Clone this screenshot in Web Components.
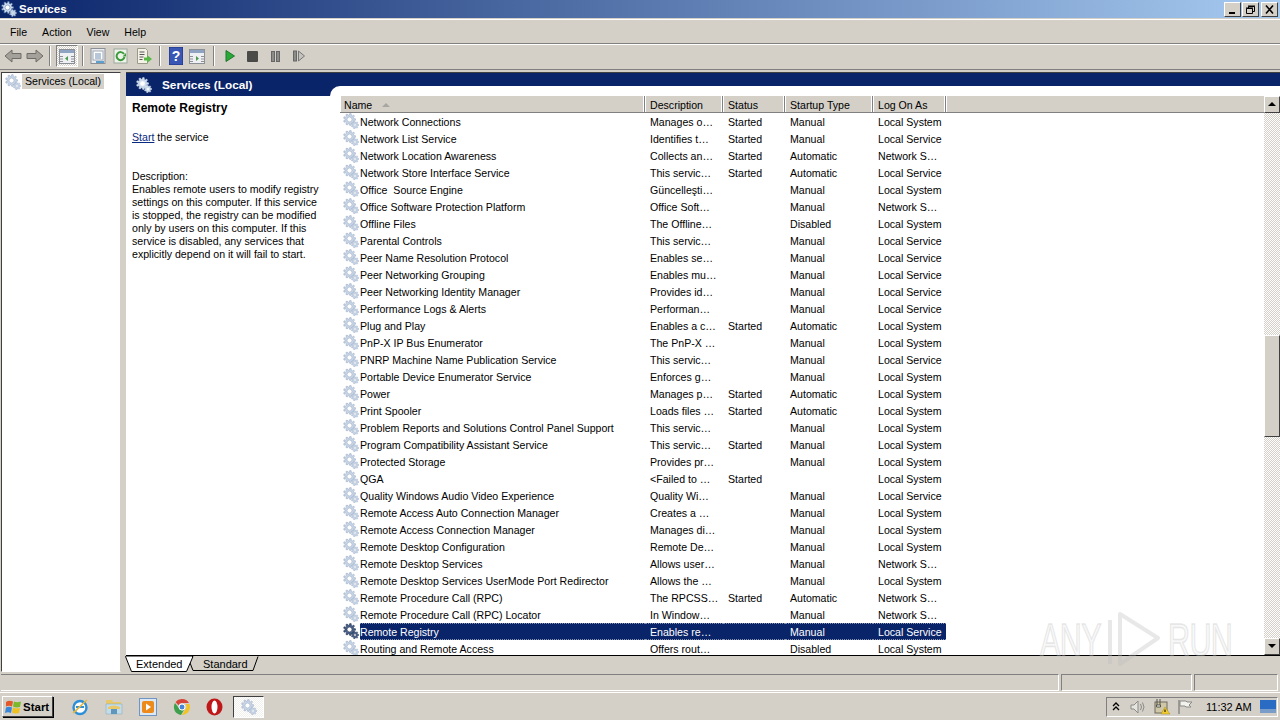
<!DOCTYPE html>
<html>
<head>
<meta charset="utf-8">
<title>Services</title>
<style>
    html, body { margin: 0; padding: 0; height: 100%; overflow: hidden; background: #d4d0c8; }
    body { font: 10.6px "Liberation Sans", Arial, sans-serif; color: #000; }
</style>
</head>
<body>
<services-window></services-window>
<script>
// gear outline, used by every service icon
function gearPath(cx, cy, r, teeth) {
    const inner = r * 0.74;
    let d = '';
    const step = Math.PI * 2 / teeth;
    for (let i = 0; i < teeth; i++) {
        const a = i * step;
        const pts = [
            [inner, a - step * 0.5], [inner, a - step * 0.28],
            [r, a - step * 0.18], [r, a + step * 0.18], [inner, a + step * 0.28]
        ];
        pts.forEach((p, j) => {
            const x = (cx + Math.cos(p[1]) * p[0]).toFixed(2);
            const y = (cy + Math.sin(p[1]) * p[0]).toFixed(2);
            d += (i === 0 && j === 0 ? 'M' : 'L') + x + ' ' + y;
        });
    }
    return d + 'Z';
}

function gearSvg(size, fill, line) {
    return `<svg width="${size}" height="${size}" viewBox="0 0 16 16" style="display:block">
        <path d="${gearPath(6.5, 6.5, 6, 9)}" fill="${fill}" stroke="${line}" stroke-width=".6"/>
        <circle cx="6.5" cy="6.5" r="2.5" fill="#fff" stroke="${line}" stroke-width=".6"/>
        <path d="${gearPath(12, 12, 3.7, 7)}" fill="${fill}" stroke="${line}" stroke-width=".5"/>
        <circle cx="12" cy="12" r="1.2" fill="#fff" stroke="${line}" stroke-width=".4"/>
    </svg>`;
}

class ServiceGear extends HTMLElement {
    connectedCallback() {
        const size = this.getAttribute('size') || 16;
        const fill = this.getAttribute('fill') || '#c9d6e7';
        const line = this.getAttribute('line') || '#9cadc6';
        this.attachShadow({ mode: 'open' }).innerHTML = `
            <style>:host { display: block; width: ${size}px; height: ${size}px; }</style>
            ${gearSvg(size, fill, line)}`;
    }
}

class TitleBar extends HTMLElement {
    connectedCallback() {
        this.attachShadow({ mode: 'open' }).innerHTML = `
            <style>
                :host {
                    display: flex; align-items: center; height: 18px; padding: 0 2px 0 1px;
                    background: linear-gradient(90deg, #0a246a 0%, #a6caf0 100%);
                    color: #fff; font-weight: bold; font-size: 11.6px;
                }
                service-gear { margin-right: 2px; }
                .name { flex: 1; padding-bottom: 2px; }
                .btn {
                    width: 15px; height: 13px; margin-left: 2px; background: #d4d0c8;
                    border: 1px solid; border-color: #fff #404040 #404040 #fff; box-sizing: content-box;
                }
                .btn svg { display: block; }
                .btn + .btn { margin-left: 1px; }
                .btn:last-child { margin-left: 2px; }
            </style>
            <service-gear size="16" fill="#cfe0f2" line="#5f7fa8"></service-gear>
            <span class="name">Services</span>
            <div class="btn"><svg width="15" height="13"><rect x="4" y="9" width="6" height="2" fill="#000"/></svg></div>
            <div class="btn"><svg width="15" height="13"><path d="M5.5 3.5h6v5h-2M5.500 3.500v1.500M3.500 5.500h6v5h-6z" fill="none" stroke="#000"/><path d="M5 3h7M3 5h7" stroke="#000"/></svg></div>
            <div class="btn"><svg width="15" height="13"><path d="M4 2.500l7 8M11 2.500l-7 8" stroke="#000" stroke-width="1.600"/></svg></div>`;
    }
}

class MenuBar extends HTMLElement {
    connectedCallback() {
        this.attachShadow({ mode: 'open' }).innerHTML = `
            <style>
                :host {
                    display: flex; align-items: center; height: 23px; padding-left: 2px;
                    border-top: 1px solid #fff; border-bottom: 1px solid #808080;
                    margin-top: 1px; box-sizing: content-box;
                }
                span { padding: 0 7px 0 8px; }
            </style>
            <span>File</span><span>Action</span><span>View</span><span>Help</span>`;
    }
}

class ToolBar extends HTMLElement {
    connectedCallback() {
        const sep = w => `<i class="sep" style="margin:0 ${w}px"></i>`;
        this.attachShadow({ mode: 'open' }).innerHTML = `
            <style>
                :host {
                    display: flex; align-items: center; height: 22px; padding: 0 0 2px 4px;
                    border-top: 1px solid #fff; border-bottom: 1px solid #808080;
                }
                svg { display: block; flex: none; }
                .sep { display: block; width: 1px; height: 20px; background: #808080; border-right: 1px solid #fff; flex: none; }
                .pressed {
                    width: 22px; height: 22px; display: flex; align-items: center; justify-content: center; flex: none;
                    border: 1px solid; border-color: #808080 #fff #fff #808080; box-sizing: border-box;
                    background: repeating-conic-gradient(#fff 0 25%, #d4d0c8 0 50%) 0 0 / 2px 2px;
                }
                .gap { flex: none; }
            </style>
            <svg width="18" height="16" viewBox="0 0 18 16"><path d="M1 8l7-6v3.500h9v5H8V14z" fill="#a4a09a" stroke="#6e6c68"/></svg>
            <span class="gap" style="width:4px"></span>
            <svg width="18" height="16" viewBox="0 0 18 16"><path d="M17 8l-7-6v3.500H1v5h9V14z" fill="#a4a09a" stroke="#6e6c68"/></svg>
            ${sep(5)}
            <div class="pressed"><svg width="16" height="15" viewBox="0 0 16 15"><rect x=".5" y=".5" width="15" height="14" fill="#eef0f4" stroke="#8c8f96"/><rect x="1" y="1" width="14" height="3" fill="#8ea3c2"/><path d="M1 7.500h3M1 10h3M1 12.500h3M12 7.500h3M12 10h3M12 12.500h3" stroke="#8c8f96"/><path d="M9 7v5l-3-2.500z" fill="#4e9a4e"/></svg></div>
            ${sep(4)}
            <svg width="16" height="16" viewBox="0 0 16 16" style="margin-left:2px"><rect x="1" y=".5" width="14" height="15" fill="#e8ecf0" stroke="#8c8f96"/><rect x="3" y="3" width="10" height="9" fill="#fff" stroke="#a0a8b4"/><path d="M5 6h6M5 8h6M5 10h6" stroke="#6f8fb4"/><rect x="6" y="13" width="8" height="2" fill="#5da0d0"/></svg>
            <span class="gap" style="width:7px"></span>
            <svg width="15" height="16" viewBox="0 0 15 16"><rect x="1" y="1" width="13" height="14" fill="#eef4ea" stroke="#9aa69a"/><path d="M11 6a4 4 0 1 0 .5 3" fill="none" stroke="#3c9a3c" stroke-width="2"/><path d="M9.500 8.500h3.500V5z" fill="#3c9a3c"/></svg>
            <span class="gap" style="width:8px"></span>
            <svg width="16" height="16" viewBox="0 0 16 16"><path d="M1.500.5h8l2 2v13h-10z" fill="#f4f2e6" stroke="#9a9a8a"/><path d="M3.500 4h5M3.500 6.500h5M3.500 9h4M3.500 11.500h3" stroke="#55555a"/><path d="M8 9.500h3V7l5 4-5 4v-2.500H8z" fill="#58b848"/></svg>
            ${sep(7)}
            <svg width="14" height="18" viewBox="0 0 14 18" style="margin-left:1px"><rect width="14" height="18" fill="#3a56b4"/><rect x="0" y="0" width="14" height="18" fill="none" stroke="#1d2f80"/><text x="7" y="14" font-family="Liberation Sans" font-size="14" font-weight="bold" text-anchor="middle" fill="#fff">?</text></svg>
            <span class="gap" style="width:6px"></span>
            <svg width="16" height="15" viewBox="0 0 16 15"><rect x=".5" y=".5" width="15" height="14" fill="#eef0f4" stroke="#8c8f96"/><rect x="1" y="1" width="14" height="3" fill="#8ea3c2"/><path d="M1 7.500h3M1 10h3M1 12.500h3M12 7.500h3M12 10h3M12 12.500h3" stroke="#8c8f96"/><path d="M7 7v5l3-2.500z" fill="#4e9a4e"/></svg>
            ${sep(8)}
            <svg width="10" height="12" viewBox="0 0 10 12" style="margin-left:2px"><path d="M1 .5L9.500 6 1 11.500z" fill="#2aa838" stroke="#1c7a28"/></svg>
            <span class="gap" style="width:12px"></span>
            <svg width="11" height="11"><rect width="11" height="11" rx="1" fill="#4a4a48"/></svg>
            <span class="gap" style="width:13px"></span>
            <svg width="9" height="11"><rect x=".5" y=".5" width="3" height="10" fill="#8c8c88" stroke="#666"/><rect x="5.500" y=".5" width="3" height="10" fill="#8c8c88" stroke="#666"/></svg>
            <span class="gap" style="width:13px"></span>
            <svg width="12" height="12"><rect x=".5" y="1" width="3" height="10" fill="#8c8c88" stroke="#666"/><path d="M5.500 1L11.500 6 5.500 11z" fill="#c4c2bc" stroke="#777"/></svg>`;
    }
}

class TreePane extends HTMLElement {
    connectedCallback() {
        this.attachShadow({ mode: 'open' }).innerHTML = `
            <style>
                :host {
                    display: flex; align-items: flex-start; width: 120px; flex: none; box-sizing: border-box;
                    background: #fff; padding: 1px 0 0 3px;
                    border: 1px solid; border-color: #404040 #d4d0c8 #fff #404040;
                }
                span { background: #d4d0c8; padding: 1px 3px 1px 3px; margin-left: 1px; line-height: 13px; }
            </style>
            <service-gear></service-gear><span>Services (Local)</span>`;
    }
}

class DetailPane extends HTMLElement {
    connectedCallback() {
        this.attachShadow({ mode: 'open' }).innerHTML = `
            <style>
                :host { display: block; width: 214px; flex: none; padding: 6px 0 0 6px; box-sizing: border-box; background: #fff; line-height: 13px; }
                b { display: block; font-size: 12px; margin-bottom: 16px; }
                a { color: #0a2a80; text-decoration: underline; }
                p { margin: 0; }
                .desc { margin-top: 26px; white-space: nowrap; }
            </style>
            <b>Remote Registry</b>
            <p><a>Start</a> the service</p>
            <p class="desc">Description:<br>Enables remote users to modify registry<br>settings on this computer. If this service<br>is stopped, the registry can be modified<br>only by users on this computer. If this<br>service is disabled, any services that<br>explicitly depend on it will fail to start.</p>`;
    }
}

const SERVICES = [
    ['Network Connections', 'Manages o\u2026', 'Started', 'Manual', 'Local System'],
    ['Network List Service', 'Identifies t\u2026', 'Started', 'Manual', 'Local Service'],
    ['Network Location Awareness', 'Collects an\u2026', 'Started', 'Automatic', 'Network S\u2026'],
    ['Network Store Interface Service', 'This servic\u2026', 'Started', 'Automatic', 'Local Service'],
    ['Office  Source Engine', 'G\u00fcncelle\u015fti\u2026', '', 'Manual', 'Local System'],
    ['Office Software Protection Platform', 'Office Soft\u2026', '', 'Manual', 'Network S\u2026'],
    ['Offline Files', 'The Offline\u2026', '', 'Disabled', 'Local System'],
    ['Parental Controls', 'This servic\u2026', '', 'Manual', 'Local Service'],
    ['Peer Name Resolution Protocol', 'Enables se\u2026', '', 'Manual', 'Local Service'],
    ['Peer Networking Grouping', 'Enables mu\u2026', '', 'Manual', 'Local Service'],
    ['Peer Networking Identity Manager', 'Provides id\u2026', '', 'Manual', 'Local Service'],
    ['Performance Logs & Alerts', 'Performan\u2026', '', 'Manual', 'Local Service'],
    ['Plug and Play', 'Enables a c\u2026', 'Started', 'Automatic', 'Local System'],
    ['PnP-X IP Bus Enumerator', 'The PnP-X \u2026', '', 'Manual', 'Local System'],
    ['PNRP Machine Name Publication Service', 'This servic\u2026', '', 'Manual', 'Local Service'],
    ['Portable Device Enumerator Service', 'Enforces g\u2026', '', 'Manual', 'Local System'],
    ['Power', 'Manages p\u2026', 'Started', 'Automatic', 'Local System'],
    ['Print Spooler', 'Loads files \u2026', 'Started', 'Automatic', 'Local System'],
    ['Problem Reports and Solutions Control Panel Support', 'This servic\u2026', '', 'Manual', 'Local System'],
    ['Program Compatibility Assistant Service', 'This servic\u2026', 'Started', 'Manual', 'Local System'],
    ['Protected Storage', 'Provides pr\u2026', '', 'Manual', 'Local System'],
    ['QGA', '<Failed to \u2026', 'Started', '', 'Local System'],
    ['Quality Windows Audio Video Experience', 'Quality Wi\u2026', '', 'Manual', 'Local Service'],
    ['Remote Access Auto Connection Manager', 'Creates a \u2026', '', 'Manual', 'Local System'],
    ['Remote Access Connection Manager', 'Manages di\u2026', '', 'Manual', 'Local System'],
    ['Remote Desktop Configuration', 'Remote De\u2026', '', 'Manual', 'Local System'],
    ['Remote Desktop Services', 'Allows user\u2026', '', 'Manual', 'Network S\u2026'],
    ['Remote Desktop Services UserMode Port Redirector', 'Allows the \u2026', '', 'Manual', 'Local System'],
    ['Remote Procedure Call (RPC)', 'The RPCSS\u2026', 'Started', 'Automatic', 'Network S\u2026'],
    ['Remote Procedure Call (RPC) Locator', 'In Window\u2026', '', 'Manual', 'Network S\u2026'],
    ['Remote Registry', 'Enables re\u2026', '', 'Manual', 'Local Service'],
    ['Routing and Remote Access', 'Offers rout\u2026', '', 'Disabled', 'Local System']
];

class ServiceList extends HTMLElement {
    connectedCallback() {
        const esc = s => s.replace(/&/g, '&amp;').replace(/</g, '&lt;');
        const rows = SERVICES.map(r => {
            const on = r[0] === 'Remote Registry';
            const gear = on
                ? '<service-gear fill="#4a6288" line="#1c2c50"></service-gear>'
                : '<service-gear></service-gear>';
            return `<div class="row${on ? ' on' : ''}">
                <div class="ic">${gear}</div>
                <div class="c n">${esc(r[0])}</div><div class="c d">${esc(r[1])}</div>
                <div class="c s">${r[2]}</div><div class="c t">${r[3]}</div><div class="c l">${r[4]}</div>
            </div>`;
        }).join('');
        this.attachShadow({ mode: 'open' }).innerHTML = `
            <style>
                :host { display: flex; flex-direction: column; flex: 1; min-width: 0; background: #fff; overflow: hidden; }
                .head { display: flex; height: 17px; flex: none; background: #d4d0c8; border-bottom: 1px solid #808080; box-sizing: border-box; }
                .head div {
                    box-sizing: border-box; padding: 2px 0 0 4px; line-height: 14px; white-space: nowrap; flex: none;
                    border-right: 1px solid #808080; box-shadow: inset -1px 0 0 #fff, inset 1px 0 0 #fff;
                }
                .head .rest { flex: 1; border-right: 0; box-shadow: inset 1px 0 0 #fff; }
                .arrow { display: inline-block; margin-left: 10px; vertical-align: 2px; width: 0; height: 0;
                    border: 4px solid transparent; border-top: 0; border-bottom: 4px solid #a8a6a0; }
                .rows { flex: 1; overflow: hidden; }
                .row { display: flex; height: 17px; line-height: 19px; width: 606px; }
                .ic { width: 20px; flex: none; padding: 0 0 0 3px; box-sizing: border-box; }
                .c { flex: none; box-sizing: border-box; overflow: hidden; white-space: pre; }
                .n { width: 285px; }
                .d { width: 78px; padding-left: 5px; }
                .s { width: 62px; padding-left: 5px; }
                .t { width: 88px; padding-left: 5px; }
                .l { width: 73px; padding-left: 5px; }
                .on .c {
                    background: #0a246a; color: #fff; line-height: 17px;
                    border-top: 1px dotted #8a94ac; border-bottom: 1px dotted #8a94ac;
                }
            </style>
            <div class="head">
                <div style="width:305px">Name<span class="arrow"></span></div>
                <div style="width:78px;padding-left:5px">Description</div>
                <div style="width:62px;padding-left:5px">Status</div>
                <div style="width:88px;padding-left:5px">Startup Type</div>
                <div style="width:73px;padding-left:5px">Log On As</div>
                <div class="rest"></div>
            </div>
            <div class="rows">${rows}</div>`;
    }
}

class ListScrollbar extends HTMLElement {
    connectedCallback() {
        const btn = d => `<div class="btn"><svg width="16" height="16"><path d="${d}" fill="#000"/></svg></div>`;
        this.attachShadow({ mode: 'open' }).innerHTML = `
            <style>
                :host {
                    display: flex; flex-direction: column; width: 16px; flex: none;
                    background: repeating-conic-gradient(#d4d0c8 0 25%, #fff 0 50%) 0 0 / 2px 2px;
                }
                .btn, .thumb {
                    box-sizing: border-box; background: #d4d0c8; flex: none;
                    border: 1px solid; border-color: #fff #404040 #404040 #fff;
                }
                .btn { height: 17px; }
                .btn svg { display: block; margin: -1px 0 0 -1px; }
                .thumb { height: 102px; }
                .fill { flex: 1; }
            </style>
            ${btn('M4 10h8L8 6z')}
            <div style="height:222px;flex:none"></div>
            <div class="thumb"></div>
            <div class="fill"></div>
            ${btn('M4 6h8L8 10z')}`;
    }
}

class TabStrip extends HTMLElement {
    connectedCallback() {
        this.attachShadow({ mode: 'open' }).innerHTML = `
            <style>
                :host { display: block; position: relative; height: 17px; background: #d4d0c8; }
                svg { position: absolute; left: 0; top: 0; }
                .tabs { position: relative; display: flex; padding-left: 11px; line-height: 16px; font-size: 11px; }
                span:first-child { width: 67px; }
            </style>
            <svg width="140" height="17">
                <path d="M66.500 0.500l5.500 14h60l5-14" fill="#d4d0c8" stroke="#000" transform="translate(-4 0)"/>
                <path d="M0.500 0.500l6 15h55l6.500-15z" fill="#fff" stroke="#000"/>
                <path d="M1 0h66" stroke="#fff"/>
            </svg>
            <div class="tabs"><span>Extended</span><span>Standard</span></div>`;
    }
}

class StatusBar extends HTMLElement {
    connectedCallback() {
        this.attachShadow({ mode: 'open' }).innerHTML = `
            <style>
                :host { display: flex; height: 19px; gap: 2px; padding: 1px 2px 1px 1px; box-sizing: border-box; }
                div { box-sizing: border-box; border: 1px solid; border-color: #808080 #fff #fff #808080; border-left-width: 1px; }
                .a { flex: 1; border-left: 0; }
                .b { width: 131px; }
                .c { width: 84px; }
            </style>
            <div class="a"></div><div class="b"></div><div class="c"></div>`;
    }
}

class TaskBar extends HTMLElement {
    connectedCallback() {
        this.attachShadow({ mode: 'open' }).innerHTML = `
            <style>
                :host { display: flex; align-items: center; height: 28px; padding: 0 2px; box-sizing: border-box; background: #d4d0c8; border-top: 1px solid #fff; }
                svg { display: block; flex: none; }
                .start {
                    display: flex; align-items: center; width: 51px; height: 21px; box-sizing: border-box; flex: none;
                    border: 1px solid; border-color: #fff #404040 #404040 #fff; font-weight: bold; font-size: 11.5px;
                    box-shadow: 1px 1px 0 #000; padding-left: 2px; gap: 1px;
                }
                .apps { display: flex; align-items: center; flex: none; margin-left: 18px; }
                .apps svg { margin-right: 16px; }
                .active {
                    display: flex; align-items: center; justify-content: center; width: 31px; height: 22px; box-sizing: border-box; flex: none;
                    border: 1px solid; border-color: #404040 #fff #fff #404040; margin-left: -6px;
                    background: repeating-conic-gradient(#fff 0 25%, #f0efec 0 50%) 0 0 / 2px 2px;
                }
                .tray {
                    margin-left: auto; display: flex; align-items: center; width: 172px; height: 20px; box-sizing: border-box; flex: none;
                    border: 1px solid; border-color: #808080 #fff #fff #808080; padding-left: 5px;
                }
                .clock { margin-left: 13px; white-space: nowrap; width: 54px; flex: none; font-size: 11px; }
            </style>
            <div class="start">
                <svg width="17" height="16" viewBox="0 0 17 16"><path d="M1 3q3-2 7-.5L7 7.500q-3-1.500-6 0z" fill="#e2582a"/><path d="M9 2.500q3 1.500 7 0L15 8q-4 1-7-.5z" fill="#7cb82c"/><path d="M1 8.500q3-1.500 6 0L6 14q-3-1.500-6 0z" fill="#3a86d8"/><path d="M8 8.500q3 1.500 7 .5l-1 5q-4 1-7-.5z" fill="#f0c020"/></svg>
                <span>Start</span>
            </div>
            <div class="apps">
                <svg width="18" height="18" viewBox="0 0 18 18"><circle cx="9" cy="9.500" r="6.500" fill="#fff" stroke="#2d8fd8" stroke-width="2.400"/><path d="M5 9h8" stroke="#2d8fd8" stroke-width="2"/><path d="M2 15C5 13 12 5 16 2" fill="none" stroke="#e8b838" stroke-width="1.500"/></svg>
                <svg width="18" height="17" viewBox="0 0 18 17"><path d="M1 2h6l1 2h8v4H1z" fill="#e8c868"/><path d="M1 6h16v10H1z" fill="#c4dce8" stroke="#8fb0c4" stroke-width=".6"/><path d="M3 9q6-3 12 0v2H3z" fill="#e8c868"/><path d="M6 16v-5h6v5z" fill="#5f97bc"/></svg>
                <svg width="18" height="18" viewBox="0 0 18 18"><rect x=".5" y=".5" width="17" height="17" fill="#dce8f4" stroke="#6f95c4"/><rect x="3" y="3" width="12" height="12" rx="2" fill="#ec8a1c"/><path d="M7 5.500l5 3.500-5 3.500z" fill="#fff"/></svg>
                <svg width="18" height="18" viewBox="0 0 18 18"><path d="M9 1a8 8 0 0 1 7 4H9a4 4 0 0 0-3.600 2.200L2.500 4A8 8 0 0 1 9 1z" fill="#d8433a"/><path d="M16.400 6A8 8 0 0 1 9 17l3.500-6a4 4 0 0 0 0-5z" fill="#f0c428"/><path d="M2 5a8 8 0 0 0 6 12l3-5a4 4 0 0 1-5.500-2.500z" fill="#3ea04c"/><circle cx="9" cy="9" r="3" fill="#4a86d8" stroke="#fff"/></svg>
                <svg width="17" height="18" viewBox="0 0 17 18" style="margin-left:-1px"><ellipse cx="8.500" cy="9" rx="8" ry="8.500" fill="#c01818"/><ellipse cx="8.500" cy="9" rx="3" ry="6.500" fill="#fff"/></svg>
            </div>
            <div class="active"><service-gear></service-gear></div>
            <div class="tray">
                <svg width="8" height="9" viewBox="0 0 8 9"><path d="M1 4l3-3 3 3M1 8l3-3 3 3" fill="none" stroke="#000" stroke-width="1.300"/></svg>
                <span style="width:10px;flex:none"></span>
                <svg width="16" height="14" viewBox="0 0 16 14"><path d="M1 5h3l4-4v12l-4-4H1z" fill="#e6e4de" stroke="#8a8a86"/><path d="M10.500 4q2 3 0 6M12.500 2.500q3 4.500 0 9" fill="none" stroke="#8a8a86"/></svg>
                <span style="width:8px;flex:none"></span>
                <svg width="17" height="17" viewBox="0 0 17 17"><rect x="1" y="4" width="12" height="11" fill="#cfc7a8" stroke="#6e6a58"/><path d="M3 1v6M6 1v6M2.500 7h4v2h-4z" fill="#fff" stroke="#55534a"/><path d="M11 9l5 7h-9z" fill="#f4cc30" stroke="#a08820" stroke-width=".5"/><path d="M11 11.500v2.500" stroke="#000"/></svg>
                <span style="width:6px;flex:none"></span>
                <svg width="16" height="16" viewBox="0 0 16 16"><path d="M2 1v14" stroke="#8a8a86" stroke-width="1.500"/><path d="M3 2h6l1 1h5l-3 3 2 2H9L8 7H3z" fill="#f4f2ec" stroke="#8a8a86"/></svg>
                <span class="clock">11:32 AM</span>
                <svg width="16" height="13" viewBox="0 0 16 13"><rect width="16" height="13" fill="#2a6cc4"/><rect x="0" y="9" width="16" height="4" fill="#7a9cc8"/></svg>
            </div>`;
    }
}

class WaterMark extends HTMLElement {
    connectedCallback() {
        this.attachShadow({ mode: 'open' }).innerHTML = `
            <style>
                :host { position: absolute; left: 1040px; top: 608px; width: 196px; height: 64px; display: flex; align-items: center; pointer-events: none; }
                span {
                    font: 47px "Liberation Sans", Arial, sans-serif; letter-spacing: -1px;
                    color: rgba(200,200,200,.12); -webkit-text-stroke: 1.5px rgba(190,190,190,.35);
                    transform: scaleX(.65); transform-origin: left center; display: block; width: 66px; flex: none; line-height: 56px;
                }
                svg { flex: none; margin-right: 4px; }
            </style>
            <span>ANY</span>
            <svg width="58" height="64" viewBox="0 0 58 64"><path d="M4 12V56M14 6v50l38-26z" fill="none" stroke="rgba(190,190,190,.35)" stroke-width="4" stroke-linejoin="round"/></svg>
            <span>RUN</span>`;
    }
}

class ServicesWindow extends HTMLElement {
    connectedCallback() {
        this.attachShadow({ mode: 'open' }).innerHTML = `
            <style>
                :host { display: flex; flex-direction: column; width: 1280px; height: 720px; position: relative; overflow: hidden; background: #d4d0c8; }
                :host > * { flex: none; }
                .main { display: flex; height: 584px; margin-top: 2px; padding: 0 0 0 1px; }
                .left { display: flex; flex: none; height: 600px; }
                .split { width: 5px; flex: none; }
                .right { flex: 1; min-width: 0; display: flex; flex-direction: column; border-bottom: 1px solid #000; border-top: 1px solid #404040; }
                .band { display: flex; height: 23px; flex: none; background: #0a246a; color: #fff; font-weight: bold; font-size: 11.8px; }
                .band .title { display: flex; align-items: center; width: 204px; flex: none; padding: 1px 0 0 10px; box-sizing: border-box; gap: 10px; }
                .band .cut { flex: 1; margin-top: 13px; background: #fff; border-top-left-radius: 12px; }
                .body { flex: 1; display: flex; min-height: 0; background: #fff; }
                .bottom { display: flex; height: 17px; padding-left: 125px; }
                .bottom tab-strip { flex: 1; }
            </style>
            <title-bar></title-bar>
            <menu-bar></menu-bar>
            <tool-bar></tool-bar>
            <div class="main">
                <div class="left"><tree-pane></tree-pane></div>
                <div class="split"></div>
                <div class="right">
                    <div class="band">
                        <div class="title"><service-gear fill="#c8d8ea" line="#dfe8f2"></service-gear><span>Services (Local)</span></div>
                        <div class="cut"></div>
                    </div>
                    <div class="body">
                        <detail-pane></detail-pane>
                        <service-list></service-list>
                        <list-scrollbar></list-scrollbar>
                    </div>
                </div>
            </div>
            <div class="bottom"><tab-strip></tab-strip></div>
            <status-bar></status-bar>
            <task-bar></task-bar>
            <water-mark></water-mark>`;
    }
}

customElements.define('service-gear', ServiceGear);
customElements.define('title-bar', TitleBar);
customElements.define('menu-bar', MenuBar);
customElements.define('tool-bar', ToolBar);
customElements.define('tree-pane', TreePane);
customElements.define('detail-pane', DetailPane);
customElements.define('service-list', ServiceList);
customElements.define('list-scrollbar', ListScrollbar);
customElements.define('tab-strip', TabStrip);
customElements.define('status-bar', StatusBar);
customElements.define('task-bar', TaskBar);
customElements.define('water-mark', WaterMark);
customElements.define('services-window', ServicesWindow);
</script>
</body>
</html>
